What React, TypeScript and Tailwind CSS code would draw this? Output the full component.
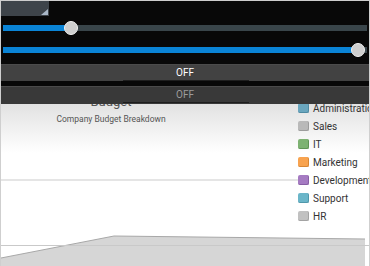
import React from "react";

type SliderProps = { value: number };

function Slider({ value }: SliderProps) {
    return (
        <div className="relative flex h-[14px] w-full items-center px-[2px]">
            <div className="flex h-[6px] w-full bg-[#39454a]">
                <div className="h-full bg-[#0a84d6]" style={{ width: `${value}%` }} />
            </div>
            <div
                className="absolute top-0 h-[14px] w-[14px] -translate-x-1/2 rounded-full border border-[#f2f2f2] bg-[#cfcfcf]"
                style={{ left: `calc(2px + ${value}% * 366 / 370)` }}
            />
        </div>
    );
}

function ToggleRow({ disabled, className }: { disabled?: boolean; className: string }) {
    return (
        <div className={`flex w-full flex-col items-center border-t border-[#4b4b4b] ${className}`}>
            <span
                className={`mt-[2px] text-[10px] leading-[12px] ${disabled ? "text-[#9c9c9c]" : "text-white"}`}
            >
                OFF
            </span>
            <div className="mt-[1px] h-[1px] w-[126px] translate-x-[1px] bg-[#1e1e1e]" />
        </div>
    );
}

const legend = [
    { label: "Administration", color: "bg-[#6aa6be]", edge: "border-[#4e8aa2]" },
    { label: "Sales", color: "bg-[#b9b9b9]", edge: "border-[#9c9c9c]" },
    { label: "IT", color: "bg-[#7db272]", edge: "border-[#5f9455]" },
    { label: "Marketing", color: "bg-[#f8a34f]", edge: "border-[#d88633]" },
    { label: "Development", color: "bg-[#a57bc2]", edge: "border-[#875ea4]" },
    { label: "Support", color: "bg-[#6bb6c9]", edge: "border-[#4f98ab]" },
    { label: "HR", color: "bg-[#c1c1c1]", edge: "border-[#a3a3a3]" },
];

export default function App() {
    return (
        <main
            className="flex h-[266px] w-[370px] flex-col overflow-hidden border-x border-[#cfcfcf] bg-white"
            style={{ fontFamily: "Roboto, 'Liberation Sans', sans-serif" }}
        >
            <section className="relative z-10 flex h-[104px] shrink-0 flex-col border-t border-[#cdcdcd] bg-[#080808]">
                <div className="relative h-[15px] w-[48px] bg-[#3e444a]">
                    <svg className="absolute right-[1px] bottom-[1px]" width="7" height="6" viewBox="0 0 7 6">
                        <polygon points="7,0 7,6 0,6" fill="#a9b7c7" />
                    </svg>
                </div>
                <div className="mt-[5px]">
                    <Slider value={18.6} />
                </div>
                <div className="mt-[8px]">
                    <Slider value={97.5} />
                </div>
                <div className="mt-[7px] h-[17px]">
                    <ToggleRow className="h-full bg-[#424242]" />
                </div>
                <div className="mt-[5px] h-[18px]">
                    <ToggleRow disabled className="h-full bg-[#393939]" />
                </div>
            </section>

            <section className="relative flex flex-1 flex-col bg-gradient-to-b from-[#e2e2e2] via-white via-30% to-white">
                <div className="flex w-[220px] flex-col items-center">
                    <h1 className="-mt-[9px] text-[13px] leading-[14px] text-[#555]">Budget</h1>
                    <p className="mt-[5px] text-[8.5px] leading-[11px] text-[#555]">Company Budget Breakdown</p>
                </div>

                <svg className="absolute inset-0" width="368" height="162" viewBox="0 0 368 162">
                    <line x1="0" y1="76" x2="298" y2="76" stroke="#dcdcdc" strokeWidth="1.5" />
                    <polygon points="0,154 113,132 364,135 364,162 0,162" fill="#d6d6d6" />
                    <polyline points="0,154 113,132 364,135" fill="none" stroke="#a8a8a8" strokeWidth="1" />
                    <line x1="0" y1="141.5" x2="368" y2="141.5" stroke="#c9c9c9" strokeWidth="1.2" />
                </svg>

                <ul className="absolute top-[-5px] left-[297px] flex flex-col">
                    {legend.map((item) => (
                        <li key={item.label} className="flex h-[18px] items-center gap-[4px]">
                            <span className={`h-[10px] w-[11px] rounded-[2px] border-b border-r ${item.color} ${item.edge}`} />
                            <span className="whitespace-nowrap text-[10px] text-[#333]">{item.label}</span>
                        </li>
                    ))}
                </ul>
            </section>
        </main>
    );
}
